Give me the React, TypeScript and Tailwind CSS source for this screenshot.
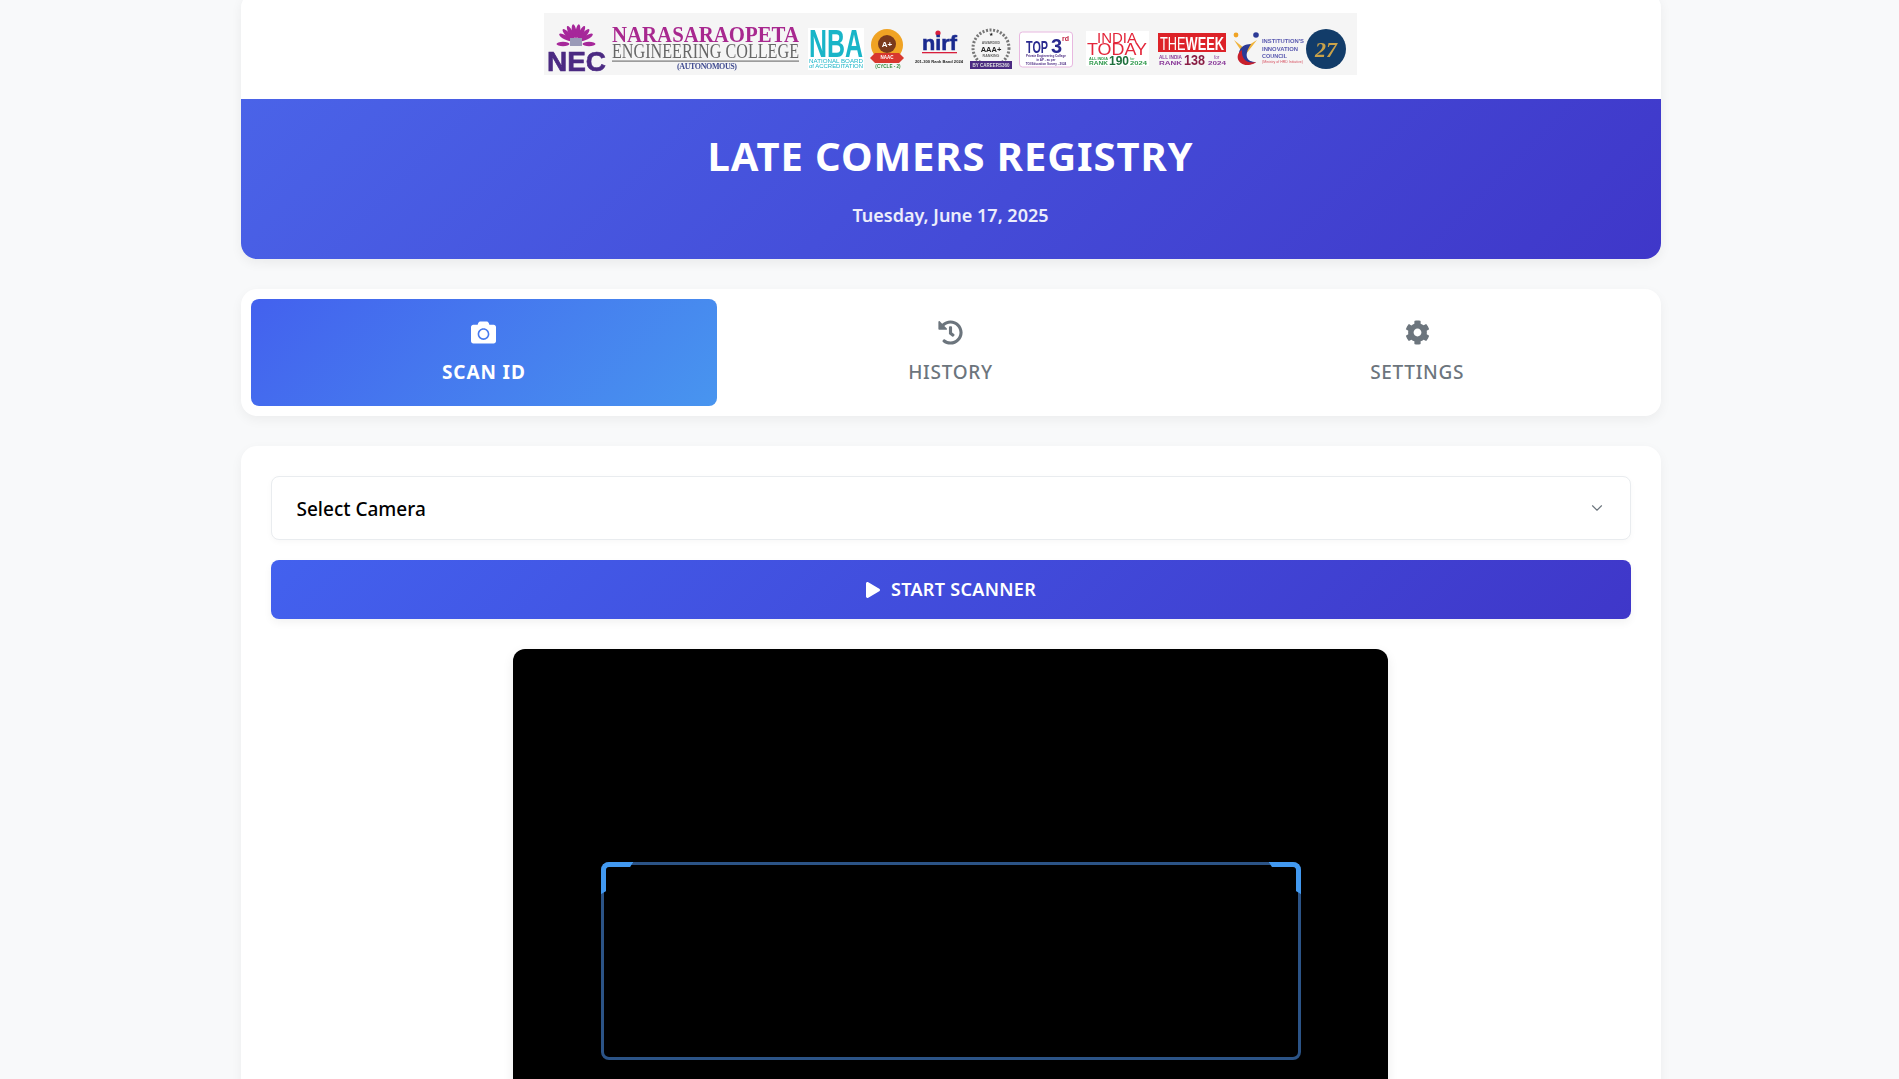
import { FaCamera, FaHistory, FaCog, FaPlay } from "react-icons/fa";
import { ChevronDown } from "lucide-react";

const serif = "Liberation Serif, serif";
const sans = "Liberation Sans, sans-serif";

function Banner() {
  return (
    <svg width="813" height="62" viewBox="0 0 813 62" className="block overflow-visible blur-[0.35px]" style={{ fontFamily: sans }}>
      <rect width="813" height="62" fill="#f5f5f5" />
      {/* NEC */}
      <g fill="#a6289a">
        {[-62, -44, -27, -9, 9, 27, 44, 62].map((a) => (
          <ellipse key={a} cx="32" cy="18" rx="2.2" ry="7" transform={`rotate(${a} 32 30)`} />
        ))}
        <ellipse cx="19" cy="31" rx="6.5" ry="2.2" />
        <ellipse cx="45" cy="31" rx="6.5" ry="2.2" />
      </g>
      <rect x="26" y="25" width="12" height="8" fill="#9a9ab8" />
      <text x="3" y="58" fontSize="27" fontWeight="700" fill="#4b2a82" stroke="#4b2a82" strokeWidth="0.6" textLength="59" lengthAdjust="spacingAndGlyphs">NEC</text>
      {/* College */}
      <text x="68" y="29" fontSize="24" fontWeight="700" fill="#a8288f" textLength="187" lengthAdjust="spacingAndGlyphs" style={{ fontFamily: serif }}>NARASARAOPETA</text>
      <text x="68" y="45" fontSize="21" fill="#666" textLength="187" lengthAdjust="spacingAndGlyphs" style={{ fontFamily: serif }}>ENGINEERING COLLEGE</text>
      <rect x="68" y="47.5" width="187" height="1.2" fill="#777" />
      <text x="133" y="56" fontSize="8" fontWeight="700" fill="#3f4a8f" textLength="60" style={{ fontFamily: serif }}>(AUTONOMOUS)</text>
      {/* NBA */}
      <rect x="264" y="15" width="56" height="42" fill="#fff" />
      <text x="265" y="44" fontSize="38" fontWeight="700" fill="#19b5c8" textLength="54" lengthAdjust="spacingAndGlyphs">NBA</text>
      <text x="265" y="49.5" fontSize="5" fill="#19b5c8" textLength="54" lengthAdjust="spacingAndGlyphs">NATIONAL BOARD</text>
      <text x="265" y="55" fontSize="5" fill="#19b5c8" textLength="54" lengthAdjust="spacingAndGlyphs">of ACCREDITATION</text>
      {/* NAAC */}
      <circle cx="343" cy="32" r="16" fill="#f0a324" />
      <circle cx="343" cy="31" r="9" fill="#7a3a1c" />
      <text x="343" y="34" fontSize="8" fontWeight="700" fill="#fff" textAnchor="middle">A+</text>
      <path d="M326 45 L331 40 H355 L360 45 L355 50 H331 Z" fill="#d8372e" />
      <text x="343" y="46" fontSize="4.5" fontWeight="700" fill="#fff" textAnchor="middle">NAAC</text>
      <text x="344" y="55" fontSize="4.6" fontWeight="700" fill="#2f8a3c" textAnchor="middle">(CYCLE - 2)</text>
      {/* NIRF */}
      <circle cx="394" cy="20" r="2.6" fill="#d81e3c" />
      <text x="378" y="37" fontSize="20" fontWeight="700" fill="#1a2a8f" stroke="#1a2a8f" strokeWidth="0.5" textLength="35" lengthAdjust="spacingAndGlyphs">nirf</text>
      <rect x="378" y="39" width="35" height="1.3" fill="#d81e3c" />
      <text x="371" y="50" fontSize="4.4" fontWeight="700" fill="#222" textLength="48" lengthAdjust="spacingAndGlyphs">201-300 Rank Band 2024</text>
      {/* AAA */}
      <circle cx="447" cy="35" r="18" fill="none" stroke="#777" strokeWidth="3" strokeDasharray="2 1.6" />
      <text x="447" y="23" fontSize="5" fill="#222" textAnchor="middle">★</text>
      <text x="447" y="31" fontSize="3.6" fontWeight="700" fill="#666" textAnchor="middle">AWARDED</text>
      <text x="447" y="39" fontSize="7.5" fontWeight="700" fill="#222" textAnchor="middle">AAA+</text>
      <text x="447" y="44" fontSize="3.6" fontWeight="700" fill="#666" textAnchor="middle">RANKING</text>
      <rect x="426" y="48" width="42" height="8" fill="#4b2a82" />
      <text x="447" y="54" fontSize="5" fontWeight="700" fill="#ddd" textAnchor="middle" textLength="37" lengthAdjust="spacingAndGlyphs">BY CAREERS360</text>
      {/* TOP 3 */}
      <rect x="475.5" y="19" width="53" height="35" rx="3" fill="#fff" stroke="#e8b8e0" strokeWidth="1" />
      <text x="482" y="40" fontSize="17" fontWeight="700" fill="#2a2a8f" textLength="22" lengthAdjust="spacingAndGlyphs">TOP</text>
      <text x="507" y="40" fontSize="20" fontWeight="700" fill="#2a2a8f">3</text>
      <text x="518" y="28" fontSize="7" fontWeight="700" fill="#c02040">rd</text>
      <text x="502" y="44" fontSize="3" fontWeight="700" fill="#4b2a82" textAnchor="middle">Private Engineering College</text>
      <text x="502" y="48" fontSize="3" fontWeight="700" fill="#4b2a82" textAnchor="middle">in AP - as per</text>
      <text x="502" y="52" fontSize="3" fontWeight="700" fill="#4b2a82" textAnchor="middle">TOI Education Survey - 2024</text>
      {/* India today */}
      <rect x="542" y="18" width="63" height="35" fill="#fff" />
      <text x="553" y="30" fontSize="14" fill="#e3263a" textLength="40" lengthAdjust="spacingAndGlyphs">INDIA</text>
      <text x="543" y="42" fontSize="16" fill="#e3263a" textLength="60" lengthAdjust="spacingAndGlyphs">TODAY</text>
      <text x="545" y="47" fontSize="4" fontWeight="700" fill="#2f9a4c" textLength="19" lengthAdjust="spacingAndGlyphs">ALL INDIA</text>
      <text x="545" y="52" fontSize="5" fontWeight="700" fill="#2f9a4c" textLength="19" lengthAdjust="spacingAndGlyphs">RANK</text>
      <text x="565" y="52" fontSize="13" fontWeight="700" fill="#1d6f3c" textLength="20" lengthAdjust="spacingAndGlyphs">190</text>
      <text x="586" y="47" fontSize="4" fill="#2f9a4c">for</text>
      <text x="586" y="52" fontSize="5" fontWeight="700" fill="#2f9a4c" textLength="17" lengthAdjust="spacingAndGlyphs">2024</text>
      {/* The week */}
      <rect x="614" y="20" width="68" height="19" fill="#dd2228" />
      <text x="616" y="37" fontSize="19" fill="#fff" textLength="64" lengthAdjust="spacingAndGlyphs">THE<tspan fontWeight="700">WEEK</tspan></text>
      <text x="615" y="46" fontSize="4.6" fontWeight="700" fill="#8a3a9a" textLength="23" lengthAdjust="spacingAndGlyphs">ALL INDIA</text>
      <text x="615" y="52" fontSize="5.5" fontWeight="700" fill="#8a3a9a" textLength="23" lengthAdjust="spacingAndGlyphs">RANK</text>
      <text x="640" y="52" fontSize="15" fontWeight="700" fill="#8a1f45" textLength="21" lengthAdjust="spacingAndGlyphs">138</text>
      <text x="670" y="46" fontSize="4.6" fill="#8a3a9a">for</text>
      <text x="664" y="52" fontSize="5.5" fontWeight="700" fill="#8a3a9a" textLength="18" lengthAdjust="spacingAndGlyphs">2024</text>
      {/* IIC */}
      <circle cx="712" cy="22" r="2.8" fill="#2c3a96" />
      <circle cx="692" cy="22" r="2.4" fill="#f0a324" />
      <path d="M690 27 L700 35 L713 27 L702 41 L696 36 Z" fill="#f0b43c" />
      <path d="M707 31 C695 31 692 42 698 48 C702 52 708 51 712 49 C703 49 699 43 707 31 Z" fill="#2c3a96" />
      <path d="M698 37 C690 42 694 52 703 52 C708 52 711 50 712 49 C704 51 697 47 698 37 Z" fill="#c8202c" />
      <g fontSize="5" fontWeight="700" fill="#5a5ab0">
        <text x="718" y="30" textLength="42" lengthAdjust="spacingAndGlyphs">INSTITUTION'S</text>
        <text x="718" y="38" textLength="36" lengthAdjust="spacingAndGlyphs">INNOVATION</text>
        <text x="718" y="45" textLength="25" lengthAdjust="spacingAndGlyphs">COUNCIL</text>
      </g>
      <text x="718" y="50" fontSize="2.8" fill="#d85060" textLength="41" lengthAdjust="spacingAndGlyphs">(Ministry of HRD Initiative)</text>
      {/* 27 */}
      <circle cx="782" cy="36" r="20" fill="#123c69" />
      <text x="782" y="44" fontSize="22" fontWeight="700" fill="#c9a24a" textAnchor="middle" fontStyle="italic" style={{ fontFamily: serif }}>27</text>
    </svg>
  );
}

function Tab({ icon, label, active }: { icon: React.ReactNode; label: string; active?: boolean }) {
  return (
    <div
      className={
        active
          ? "flex flex-1 flex-col items-center justify-center gap-[14px] rounded-lg bg-linear-[135deg,#4361ee,#4895ef] text-white h-[107px] font-bold tracking-[0.9px]"
          : "flex flex-1 flex-col items-center justify-center gap-[14px] rounded-lg text-[#6c757d] h-[107px] font-medium tracking-[0.7px]"
      }
    >
      <span className="text-[25px] leading-none">{icon}</span>
      <span className="text-[19px] leading-[26px]">{label}</span>
    </div>
  );
}

function Corner({ right }: { right?: boolean }) {
  return (
    <div
      className={
        right
          ? "absolute right-[-3px] top-[-3px] h-[32px] w-[32px] rounded-tr-[8px] border-t-[5px] border-r-[5px] border-b-[3px] border-l-[3px] border-transparent border-t-[#4299f0] border-r-[#4299f0]"
          : "absolute left-[-3px] top-[-3px] h-[32px] w-[32px] rounded-tl-[8px] border-t-[5px] border-l-[5px] border-b-[3px] border-r-[3px] border-transparent border-t-[#4299f0] border-l-[#4299f0]"
      }
    />
  );
}

export default function App() {
  return (
    <div className="h-[1079px] overflow-hidden bg-[#f8f9fa] pl-[2px]" style={{ fontFamily: '"Noto Sans", sans-serif' }}>
      <div className="mx-auto mt-[-8px] flex w-[1420px] flex-col gap-[30px]">
        <header className="overflow-hidden rounded-2xl shadow-[0_4px_12px_rgba(0,0,0,0.06)]">
          <div className="flex h-[107px] items-start justify-center bg-white pt-[21px]">
            <Banner />
          </div>
          <div className="flex h-[160px] flex-col items-center bg-linear-[135deg,#4a63e8,#3f37c9] text-white">
            <h1 className="mt-[28px] text-[40px] leading-[58px] font-bold tracking-[0.9px]">LATE COMERS REGISTRY</h1>
            <p className="mt-[17px] text-[18px] leading-[26px] font-semibold text-white/90">Tuesday, June 17, 2025</p>
          </div>
        </header>

        <nav className="flex h-[127px] items-center gap-0 rounded-2xl bg-white p-[10px] shadow-[0_4px_12px_rgba(0,0,0,0.05)]">
          <Tab active icon={<FaCamera />} label="SCAN ID" />
          <Tab icon={<FaHistory />} label="HISTORY" />
          <Tab icon={<FaCog />} label="SETTINGS" />
        </nav>

        <main className="flex flex-col rounded-2xl bg-white px-[30px] pt-[30px] shadow-[0_4px_12px_rgba(0,0,0,0.05)]">
          <div className="flex h-[64px] items-center justify-between rounded-lg border border-[#e9ecef] bg-white pl-[25px] pr-[24px] shadow-[0_2px_6px_rgba(0,0,0,0.03)]">
            <span className="pt-[3px] text-[19px] text-black font-medium">Select Camera</span>
            <ChevronDown className="h-[18px] w-[18px] text-[#6c757d]" strokeWidth={1.5} />
          </div>
          <button className="mt-[20px] flex h-[59px] items-center justify-center gap-[10px] rounded-lg bg-linear-[135deg,#4361ee,#3f37c9] text-[18px] font-semibold tracking-[0.3px] text-white shadow-[0_4px_8px_rgba(0,0,0,0.05)]">
            <FaPlay className="text-[16px]" />
            START SCANNER
          </button>
          <div className="relative mx-auto mt-[30px] flex h-[624px] w-[875px] justify-center rounded-xl bg-black pt-[213px] shadow-[0_4px_12px_rgba(0,0,0,0.08)]">
            <div className="relative h-[198px] w-[700px] rounded-[8px] border-[3px] border-[#2b5386]">
              <Corner />
              <Corner right />
            </div>
          </div>
          <div className="h-[30px]" />
        </main>
      </div>
    </div>
  );
}
